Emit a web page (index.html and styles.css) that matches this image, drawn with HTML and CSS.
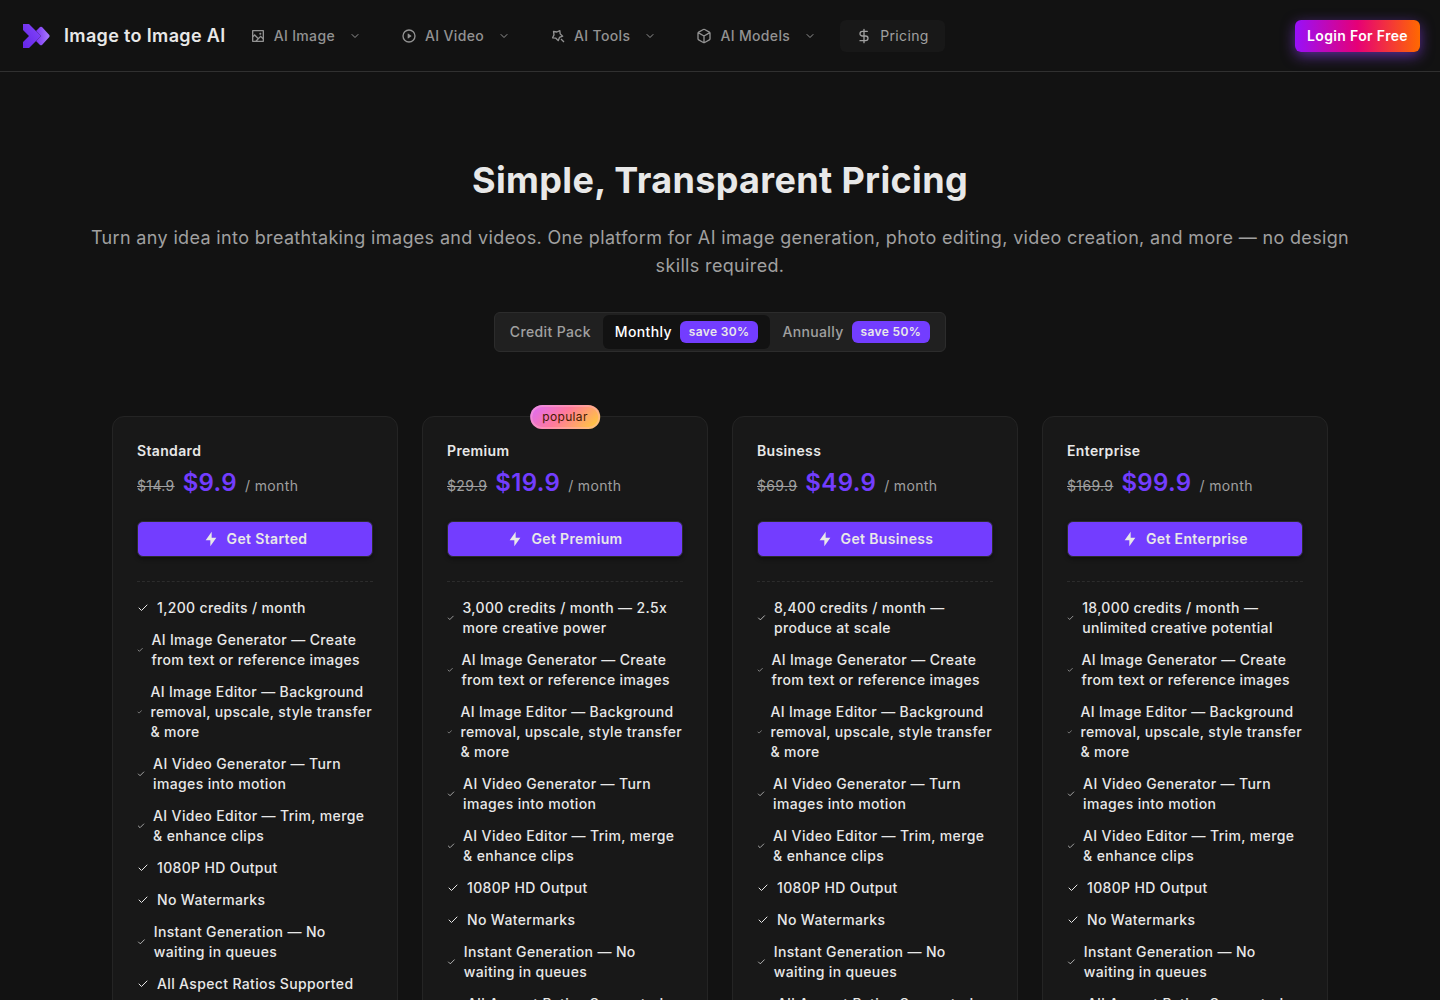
FILE: index.html
```html
<!DOCTYPE html>
<html lang="en">
<head>
<meta charset="utf-8">
<meta name="viewport" content="width=device-width, initial-scale=1">
<title>Pricing - Image to Image AI</title>
<link rel="stylesheet" href="styles.css">
</head>
<body>
<svg class="sprite" aria-hidden="true">
  <symbol id="chevron" viewBox="0 0 24 24"><path d="m6 9 6 6 6-6" fill="none" stroke="currentColor" stroke-width="2" stroke-linecap="round" stroke-linejoin="round"/></symbol>
  <symbol id="check" viewBox="0 0 24 24"><path d="M20 6 9 17l-5-5" fill="none" stroke="currentColor" stroke-width="2" stroke-linecap="round" stroke-linejoin="round"/></symbol>
  <symbol id="bolt" viewBox="0 0 24 24"><path d="M13 10H20L11 23V14H4L13 1V10Z" fill="currentColor"/></symbol>
</svg>
<header class="site-header">
  <a class="brand" href="#">
    <svg class="brand-logo" viewBox="0 0 32 32" aria-hidden="true">
      <defs>
        <linearGradient id="front" x1="0" y1="1" x2="1" y2="0"><stop offset="0" stop-color="#6425e8"/><stop offset="1" stop-color="#8447fa"/></linearGradient>
        <linearGradient id="back" x1="0" y1="0" x2="1" y2="0"><stop offset="0" stop-color="#7a35f2"/><stop offset="1" stop-color="#a97bff"/></linearGradient>
      </defs>
      <path d="M3 4H9L21 16L9 28H3V22L9 16L3 10Z" fill="url(#front)"/>
      <path d="M20 7Q21 6.500 22 7L29.300 15Q30 16 29.300 17L22 25Q21 25.500 20 25L16 21L21 16L16 11Z" fill="url(#back)"/>
    </svg>
    <span>Image to Image AI</span>
  </a>
  <nav class="main-nav" aria-label="Main">
    <button class="nav-item" type="button">
      <svg class="icon" viewBox="0 0 24 24" aria-hidden="true"><path fill="currentColor" d="M5 11.1005L7 9.1005L12.5 14.6005L16 11.1005L19 14.1005V5H5V11.1005ZM5 13.9289V19H8.1005L11.0858 16.0147L7 11.9289L5 13.9289ZM10.9289 19H19V16.9289L16 13.9289L10.9289 19ZM4 3H20C20.5523 3 21 3.44772 21 4V20C21 20.5523 20.5523 21 20 21H4C3.44772 21 3 20.5523 3 20V4C3 3.44772 3.44772 3 4 3ZM15.5 10C14.6716 10 14 9.32843 14 8.5C14 7.67157 14.6716 7 15.5 7C16.3284 7 17 7.67157 17 8.5C17 9.32843 16.3284 10 15.5 10Z"/></svg>
      <span>AI Image</span><svg class="chevron" aria-hidden="true"><use href="#chevron"/></svg>
    </button>
    <button class="nav-item" type="button">
      <svg class="icon" viewBox="0 0 24 24" aria-hidden="true"><circle cx="12" cy="12" r="9" fill="none" stroke="currentColor" stroke-width="2"/><path fill="currentColor" d="M10.6219 8.41459L15.5008 11.6672C15.6846 11.7897 15.7343 12.0381 15.6117 12.2219L10.6219 15.5854C10.4381 15.708 10 15.6 10 15.2526V8.74741C10 8.4 10.4 8.25 10.6219 8.41459Z"/></svg>
      <span>AI Video</span><svg class="chevron" aria-hidden="true"><use href="#chevron"/></svg>
    </button>
    <button class="nav-item" type="button">
      <svg class="icon" viewBox="0 0 24 24" aria-hidden="true"><path fill="none" stroke="currentColor" stroke-width="2" stroke-linejoin="round" d="M14.7 3.9L15.3 8.8L19 12.3L14.200 14.200L12.300 19L8.800 15.300L3.900 14.700L6 10.300L5.300 5.300L10.300 6ZM16.500 16.500L21 21"/></svg>
      <span>AI Tools</span><svg class="chevron" aria-hidden="true"><use href="#chevron"/></svg>
    </button>
    <button class="nav-item" type="button">
      <svg class="icon" viewBox="0 0 24 24" aria-hidden="true"><path fill="none" stroke="currentColor" stroke-width="2" stroke-linecap="round" stroke-linejoin="round" d="M21 8a2 2 0 0 0-1-1.730l-7-4a2 2 0 0 0-2 0l-7 4A2 2 0 0 0 3 8v8a2 2 0 0 0 1 1.730l7 4a2 2 0 0 0 2 0l7-4A2 2 0 0 0 21 16ZM3.300 7l8.700 5 8.700-5M12 22V12"/></svg>
      <span>AI Models</span><svg class="chevron" aria-hidden="true"><use href="#chevron"/></svg>
    </button>
    <a class="nav-item current" href="#" aria-current="page">
      <svg class="icon" viewBox="0 0 24 24" aria-hidden="true"><path fill="none" stroke="currentColor" stroke-width="2" stroke-linecap="round" stroke-linejoin="round" d="M12 2V22M17 5H9.500a3.500 3.500 0 0 0 0 7h5a3.500 3.500 0 0 1 0 7H6"/></svg>
      <span>Pricing</span>
    </a>
  </nav>
  <button class="login" type="button">Login For Free</button>
</header>
<main>
  <section class="intro">
    <h1>Simple, Transparent Pricing</h1>
    <p>Turn any idea into breathtaking images and videos. One platform for AI image generation, photo editing, video creation, and more — no design skills required.</p>
  </section>
  <div class="billing" role="tablist" aria-label="Billing period">
    <button class="tab" type="button" role="tab" aria-selected="false">Credit Pack</button>
    <button class="tab" type="button" role="tab" aria-selected="true">Monthly <span class="badge">save 30%</span></button>
    <button class="tab" type="button" role="tab" aria-selected="false">Annually <span class="badge">save 50%</span></button>
  </div>
  <section class="plans" aria-label="Plans">
    <article class="plan">
      <h2>Standard</h2>
      <p class="price"><s>$14.9</s><strong>$9.9</strong><span>/ month</span></p>
      <button class="buy" type="button"><svg class="icon" aria-hidden="true"><use href="#bolt"/></svg>Get Started</button>
      <ul class="features">
        <li><svg aria-hidden="true"><use href="#check"/></svg><span>1,200 credits / month</span></li>
        <li><svg aria-hidden="true"><use href="#check"/></svg><span>AI Image Generator — Create from text or reference images</span></li>
        <li><svg aria-hidden="true"><use href="#check"/></svg><span>AI Image Editor — Background removal, upscale, style transfer &amp; more</span></li>
        <li><svg aria-hidden="true"><use href="#check"/></svg><span>AI Video Generator — Turn images into motion</span></li>
        <li><svg aria-hidden="true"><use href="#check"/></svg><span>AI Video Editor — Trim, merge &amp; enhance clips</span></li>
        <li><svg aria-hidden="true"><use href="#check"/></svg><span>1080P HD Output</span></li>
        <li><svg aria-hidden="true"><use href="#check"/></svg><span>No Watermarks</span></li>
        <li><svg aria-hidden="true"><use href="#check"/></svg><span>Instant Generation — No waiting in queues</span></li>
        <li><svg aria-hidden="true"><use href="#check"/></svg><span>All Aspect Ratios Supported</span></li>
      </ul>
    </article>
    <article class="plan">
      <span class="popular">popular</span>
      <h2>Premium</h2>
      <p class="price"><s>$29.9</s><strong>$19.9</strong><span>/ month</span></p>
      <button class="buy" type="button"><svg class="icon" aria-hidden="true"><use href="#bolt"/></svg>Get Premium</button>
      <ul class="features">
        <li><svg aria-hidden="true"><use href="#check"/></svg><span>3,000 credits / month — 2.5x more creative power</span></li>
        <li><svg aria-hidden="true"><use href="#check"/></svg><span>AI Image Generator — Create from text or reference images</span></li>
        <li><svg aria-hidden="true"><use href="#check"/></svg><span>AI Image Editor — Background removal, upscale, style transfer &amp; more</span></li>
        <li><svg aria-hidden="true"><use href="#check"/></svg><span>AI Video Generator — Turn images into motion</span></li>
        <li><svg aria-hidden="true"><use href="#check"/></svg><span>AI Video Editor — Trim, merge &amp; enhance clips</span></li>
        <li><svg aria-hidden="true"><use href="#check"/></svg><span>1080P HD Output</span></li>
        <li><svg aria-hidden="true"><use href="#check"/></svg><span>No Watermarks</span></li>
        <li><svg aria-hidden="true"><use href="#check"/></svg><span>Instant Generation — No waiting in queues</span></li>
        <li><svg aria-hidden="true"><use href="#check"/></svg><span>All Aspect Ratios Supported</span></li>
      </ul>
    </article>
    <article class="plan">
      <h2>Business</h2>
      <p class="price"><s>$69.9</s><strong>$49.9</strong><span>/ month</span></p>
      <button class="buy" type="button"><svg class="icon" aria-hidden="true"><use href="#bolt"/></svg>Get Business</button>
      <ul class="features">
        <li><svg aria-hidden="true"><use href="#check"/></svg><span>8,400 credits / month — produce at scale</span></li>
        <li><svg aria-hidden="true"><use href="#check"/></svg><span>AI Image Generator — Create from text or reference images</span></li>
        <li><svg aria-hidden="true"><use href="#check"/></svg><span>AI Image Editor — Background removal, upscale, style transfer &amp; more</span></li>
        <li><svg aria-hidden="true"><use href="#check"/></svg><span>AI Video Generator — Turn images into motion</span></li>
        <li><svg aria-hidden="true"><use href="#check"/></svg><span>AI Video Editor — Trim, merge &amp; enhance clips</span></li>
        <li><svg aria-hidden="true"><use href="#check"/></svg><span>1080P HD Output</span></li>
        <li><svg aria-hidden="true"><use href="#check"/></svg><span>No Watermarks</span></li>
        <li><svg aria-hidden="true"><use href="#check"/></svg><span>Instant Generation — No waiting in queues</span></li>
        <li><svg aria-hidden="true"><use href="#check"/></svg><span>All Aspect Ratios Supported</span></li>
      </ul>
    </article>
    <article class="plan">
      <h2>Enterprise</h2>
      <p class="price"><s>$169.9</s><strong>$99.9</strong><span>/ month</span></p>
      <button class="buy" type="button"><svg class="icon" aria-hidden="true"><use href="#bolt"/></svg>Get Enterprise</button>
      <ul class="features">
        <li><svg aria-hidden="true"><use href="#check"/></svg><span>18,000 credits / month — unlimited creative potential</span></li>
        <li><svg aria-hidden="true"><use href="#check"/></svg><span>AI Image Generator — Create from text or reference images</span></li>
        <li><svg aria-hidden="true"><use href="#check"/></svg><span>AI Image Editor — Background removal, upscale, style transfer &amp; more</span></li>
        <li><svg aria-hidden="true"><use href="#check"/></svg><span>AI Video Generator — Turn images into motion</span></li>
        <li><svg aria-hidden="true"><use href="#check"/></svg><span>AI Video Editor — Trim, merge &amp; enhance clips</span></li>
        <li><svg aria-hidden="true"><use href="#check"/></svg><span>1080P HD Output</span></li>
        <li><svg aria-hidden="true"><use href="#check"/></svg><span>No Watermarks</span></li>
        <li><svg aria-hidden="true"><use href="#check"/></svg><span>Instant Generation — No waiting in queues</span></li>
        <li><svg aria-hidden="true"><use href="#check"/></svg><span>All Aspect Ratios Supported</span></li>
      </ul>
    </article>
  </section>
</main>
</body>
</html>
```
FILE: styles.css
```css
*, *::before, *::after { box-sizing: border-box; }

:root {
  --bg: #121212;
  --card: #181818;
  --line: #242424;
  --text: #e8e8e8;
  --muted: #a0a0a0;
  --primary: #733dff;
  --tracking: 0.025em;
}

body {
  margin: 0;
  background: var(--bg);
  color: var(--text);
  font: 400 14px/20px Inter, sans-serif;
  letter-spacing: var(--tracking);
}

h1, h2, p, ul { margin: 0; padding: 0; }
a { color: inherit; text-decoration: none; }
button { font: inherit; letter-spacing: inherit; color: inherit; border: 0; background: none; padding: 0; cursor: pointer; }
.sprite { display: none; }
.icon { width: 16px; height: 16px; flex: none; }

.site-header {
  display: flex;
  align-items: center;
  padding: 20px 20px 19px;
  border-bottom: 1px solid #303030;
}
.brand { display: flex; align-items: center; gap: 12px; margin-right: 8px; font-size: 18px; font-weight: 600; white-space: nowrap; }
.brand-logo { width: 32px; height: 32px; }
.main-nav { display: flex; align-items: center; gap: 8px; }
.nav-item { display: flex; align-items: center; gap: 8px; height: 32px; padding: 0 16px; border-radius: 6px; color: #929292; font-weight: 500; white-space: nowrap; }
.nav-item.current { background: var(--card); font-weight: 400; color: var(--muted); }
.chevron { width: 12px; height: 12px; margin-left: 6px; }
.login {
  margin-left: auto;
  height: 32px;
  padding: 0 12px;
  border-radius: 6px;
  background: linear-gradient(90deg, #9810fa, #e60076 50%, #ff6900);
  box-shadow: 0 4px 14px rgba(138, 60, 240, .6);
  color: #fff;
  font-weight: 600;
  white-space: nowrap;
}

.intro { max-width: 1344px; margin: 0 auto; padding: 88px 32px 32px; text-align: center; }
.intro h1 { font-size: 36px; line-height: 40px; font-weight: 700; }
.intro p { margin-top: 24px; font-size: 18px; line-height: 28px; color: var(--muted); }

.billing { display: flex; width: fit-content; margin: 0 auto; padding: 2px 3px; background: #202020; border: 1px solid #2c2c2c; border-radius: 6px; }
.tab { display: flex; align-items: center; gap: 8px; height: 34px; padding: 0 12px; border-radius: 6px; color: var(--muted); font-weight: 500; }
.tab[aria-selected="true"] { background: var(--bg); color: #fff; }
.badge { padding: 3px 9px; border-radius: 6px; background: var(--primary); color: var(--text); font-size: 12px; line-height: 16px; font-weight: 600; }

.plans { display: grid; grid-template-columns: repeat(4, 1fr); gap: 24px; max-width: 1280px; margin: 0 auto; padding: 64px 32px; }
.plan { position: relative; padding: 24px; background: var(--card); border: 1px solid var(--line); border-radius: 12px; }
.plan h2 { font-size: 14px; line-height: 20px; font-weight: 600; }
.popular {
  position: absolute;
  top: -12px;
  left: 50%;
  transform: translateX(-50%);
  padding: 4px 12px;
  border-radius: 12px;
  background: linear-gradient(135deg, #da6bff, #ff7a9c 45%, #ffd52e);
  box-shadow: inset 0 0 0 2px rgba(255, 180, 200, .4);
  color: #461901;
  font-size: 12px;
  line-height: 16px;
}
.price { display: flex; align-items: baseline; gap: 8px; margin-top: 6px; color: var(--muted); }
.price strong { color: var(--primary); font-size: 24px; line-height: 32px; font-weight: 600; }
.buy {
  display: flex;
  align-items: center;
  justify-content: center;
  gap: 8px;
  width: 100%;
  height: 36px;
  margin-top: 22px;
  border: 1px solid #2c2c2c;
  border-radius: 6px;
  background: var(--primary);
  box-shadow: 0 2px 4px rgba(0, 0, 0, .4);
  font-weight: 600;
}
.features { display: grid; gap: 12px; margin-top: 24px; padding-top: 16px; border-top: 1px dashed #2c2c2c; list-style: none; }
.features li { display: flex; align-items: center; gap: 8px; font-weight: 500; }
.features svg { width: 12px; height: 12px; }
```
